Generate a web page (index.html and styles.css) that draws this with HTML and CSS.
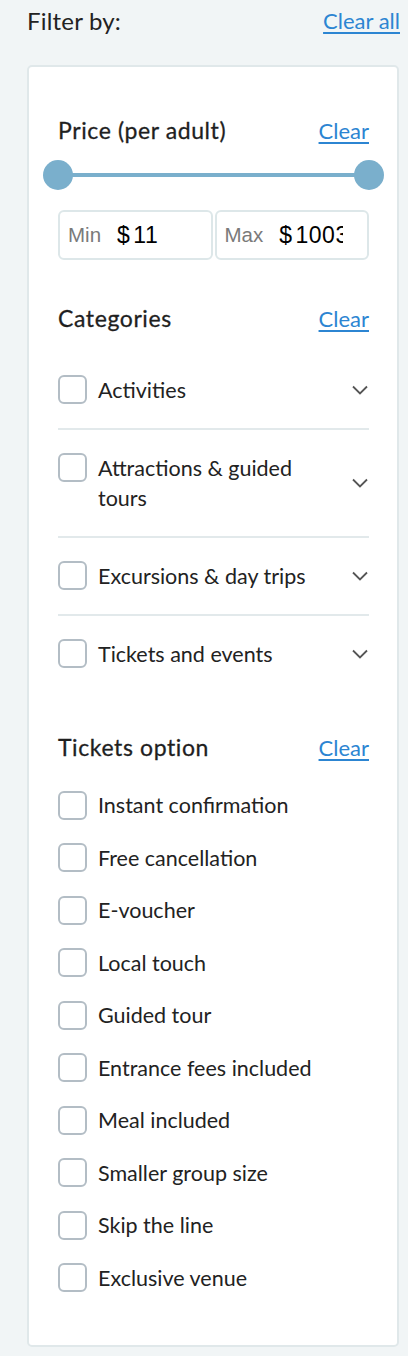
FILE: index.html
```html
<!DOCTYPE html>
<html lang="en">
<head>
<meta charset="utf-8">
<title>Filter by</title>
<link rel="stylesheet" href="styles.css">
</head>
<body>
<div class="page">
  <div class="top">
    <span class="top-title">Filter by:</span>
    <a class="link link-all" href="#">Clear all</a>
  </div>
  <div class="card">
    <section class="sec">
      <div class="sec-head">
        <h3 class="sec-title">Price (per adult)</h3>
        <a class="link" href="#">Clear</a>
      </div>
      <div class="slider">
        <div class="track"></div>
        <span class="thumb thumb-l"></span>
        <span class="thumb thumb-r"></span>
      </div>
      <div class="prices">
        <div class="pbox"><span class="plabel">Min</span><span class="pval"><span class="cur">$</span>11</span></div>
        <div class="pbox"><span class="plabel">Max</span><span class="pval"><span class="cur">$</span>1003</span></div>
      </div>
    </section>

    <section class="sec sec-cat">
      <div class="sec-head">
        <h3 class="sec-title">Categories</h3>
        <a class="link" href="#">Clear</a>
      </div>
      <ul class="cats">
        <li class="cat"><span class="box"></span><span class="cat-text">Activities</span><svg class="chev" viewBox="0 0 16 10" width="16" height="10"><path d="M1 1.5 L8 8.5 L15 1.5" fill="none" stroke="#555" stroke-width="1.8"/></svg></li>
        <li class="cat"><span class="box"></span><span class="cat-text">Attractions &amp; guided tours</span><svg class="chev" viewBox="0 0 16 10" width="16" height="10"><path d="M1 1.5 L8 8.5 L15 1.5" fill="none" stroke="#555" stroke-width="1.8"/></svg></li>
        <li class="cat"><span class="box"></span><span class="cat-text">Excursions &amp; day trips</span><svg class="chev" viewBox="0 0 16 10" width="16" height="10"><path d="M1 1.5 L8 8.5 L15 1.5" fill="none" stroke="#555" stroke-width="1.8"/></svg></li>
        <li class="cat"><span class="box"></span><span class="cat-text">Tickets and events</span><svg class="chev" viewBox="0 0 16 10" width="16" height="10"><path d="M1 1.5 L8 8.5 L15 1.5" fill="none" stroke="#555" stroke-width="1.8"/></svg></li>
      </ul>
    </section>

    <section class="sec sec-opt">
      <div class="sec-head">
        <h3 class="sec-title">Tickets option</h3>
        <a class="link" href="#">Clear</a>
      </div>
      <ul class="opts">
        <li class="opt"><span class="box"></span>Instant confirmation</li>
        <li class="opt"><span class="box"></span>Free cancellation</li>
        <li class="opt"><span class="box"></span>E-voucher</li>
        <li class="opt"><span class="box"></span>Local touch</li>
        <li class="opt"><span class="box"></span>Guided tour</li>
        <li class="opt"><span class="box"></span>Entrance fees included</li>
        <li class="opt"><span class="box"></span>Meal included</li>
        <li class="opt"><span class="box"></span>Smaller group size</li>
        <li class="opt"><span class="box"></span>Skip the line</li>
        <li class="opt"><span class="box"></span>Exclusive venue</li>
      </ul>
    </section>
  </div>
</div>
</body>
</html>
```

FILE: styles.css
```css
* { box-sizing: border-box; }
html, body {
  margin: 0;
  padding: 0;
  background: #f1f5f6;
}
body {
  font-family: Lato, "Noto Sans", "Liberation Sans", sans-serif;
  color: #222;
}
.page {
  padding: 4px 8px 10px 27px;
}
.top {
  display: flex;
  justify-content: space-between;
  align-items: center;
  height: 32px;
}
.top-title {
  font-size: 24px;
  letter-spacing: 0.2px;
  color: #222;
}
.link {
  color: #2c85d2;
  text-decoration: underline;
  text-underline-offset: 3px;
  font-size: 22px;
}
.card {
  margin-top: 29px;
  margin-right: 1px;
  background: #fff;
  border: 2px solid #e0e8ea;
  border-radius: 5px;
  padding: 49px 28px 52px 29px;
}
.sec-head {
  display: flex;
  justify-content: space-between;
  align-items: center;
  height: 28px;
}
.sec-title {
  margin: 0;
  font-size: 23px;
  letter-spacing: 0.6px;
  font-weight: 400;
  color: #1f1f1f;
  -webkit-text-stroke: 0.3px #1f1f1f;
}
.slider {
  position: relative;
  margin-top: 16px;
  height: 30px;
}
.track {
  position: absolute;
  left: 0;
  right: 0;
  top: 13px;
  height: 4px;
  background: #7aafcc;
}
.thumb {
  position: absolute;
  top: 0;
  width: 30px;
  height: 30px;
  border-radius: 50%;
  background: #7aafcc;
}
.thumb-l { left: -15px; }
.thumb-r { right: -15px; }
.prices {
  display: flex;
  gap: 2px;
  margin-top: 20px;
}
.pbox {
  flex: 1;
  min-width: 0;
  height: 50px;
  border: 2px solid #dde7e9;
  border-radius: 6px;
  display: flex;
  align-items: center;
  padding: 0 24px 0 8px;
  white-space: nowrap;
}
.plabel {
  font-family: "Liberation Sans", Arial, sans-serif;
  font-size: 20.5px;
  color: #7a7a7a;
  margin-right: 16px;
}
.pval {
  flex: 1;
  min-width: 0;
  overflow: hidden;
  font-family: "Liberation Sans", Arial, sans-serif;
  font-size: 23px;
  letter-spacing: 0.5px;
  color: #000;
}
.cur {
  margin-right: 3px;
}
.sec-cat { margin-top: 44px; }
.cats {
  list-style: none;
  margin: 43px 0 0;
  padding: 0;
}
.cat {
  display: flex;
  align-items: flex-start;
  padding: 23px 0;
  border-bottom: 2px solid #e2e9eb;
}
.cat:first-child { padding-top: 0; }
.cat:last-child { border-bottom: 0; padding-bottom: 0; }
.cat-text {
  flex: 1;
  font-size: 21.5px;
  line-height: 30px;
  padding-right: 40px;
}
.cat .chev {
  align-self: center;
  margin-right: 1px;
}
.box {
  flex: none;
  width: 29px;
  height: 29px;
  border: 2px solid #b3bdc5;
  border-radius: 6px;
  margin-right: 11px;
  background: #fff;
}
.sec-opt { margin-top: 64px; }
.opts {
  list-style: none;
  margin: 29px 0 0;
  padding: 0;
  display: flex;
  flex-direction: column;
  gap: 22.5px;
}
.opt {
  display: flex;
  align-items: center;
  font-size: 21.5px;
  line-height: 30px;
}
```
